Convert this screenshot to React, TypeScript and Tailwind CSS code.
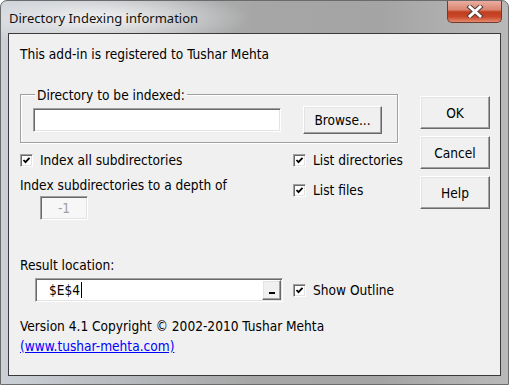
const sunken =
    'border border-t-[#a0a0a0] border-l-[#a0a0a0] border-r-white border-b-white shadow-[inset_1px_1px_0_#696969,inset_-1px_-1px_0_#e3e3e3]';
const raised =
    'border border-t-white border-l-white border-r-[#696969] border-b-[#696969] shadow-[inset_-1px_-1px_0_#a0a0a0,inset_1px_1px_0_#e3e3e3] bg-[#f0f0f0]';

const CheckBox = ({ label }: { label: string }) => (
    <div className="flex h-[16px] items-center whitespace-nowrap">
        <span className={`flex h-[13px] w-[13px] shrink-0 items-center justify-center bg-white ${sunken}`}>
            <svg width="9" height="9" viewBox="0 0 9 9">
                <path d="M1.5 4 L3.5 6.2 L7.5 1.8" fill="none" stroke="#000" strokeWidth="1.8" />
            </svg>
        </span>
        <span className="ml-[7px]">{label}</span>
    </div>
);

const DialogButton = ({ label }: { label: string }) => (
    <button type="button" className={`flex h-[33px] w-[70px] items-center justify-center ${raised}`}>
        {label}
    </button>
);

export default function App() {
    return (
        <div className="flex h-[385px] w-[509px] flex-col rounded-t-[7px] border border-[#6b6b6b] bg-[radial-gradient(ellipse_150px_28px_at_100px_17px,rgba(255,255,255,0.8),rgba(255,255,255,0)),linear-gradient(to_right,#cbd0d6,#b6b9bd_25%,#a6a6a6_50%,#a4a4a4_75%,#b9b9b9)] font-['DejaVu_Sans_Condensed','Liberation_Sans',sans-serif] text-black">
            <div className="flex h-[32px] items-start pl-[8px]">
                <span className="mt-[9px] font-['Noto_Sans',sans-serif] text-[13px] leading-[16px] text-[#111]">
                    Directory Indexing information
                </span>
                <div className="ml-auto mr-[6px] flex h-[22px] w-[55px] items-center justify-center rounded-b-[5px] border border-t-0 border-[#6e3b32] bg-[linear-gradient(to_bottom,#eaada0,#d98571_42%,#c03e1e_52%,#c9482a_75%,#e58a6c)]">
                    <svg width="18" height="13" viewBox="0 0 18 13">
                        <path d="M4 2 L14 11 M14 2 L4 11" stroke="#5a3a36" strokeWidth="5" strokeLinecap="square" />
                        <path d="M4 2 L14 11 M14 2 L4 11" stroke="#fff" strokeWidth="3" strokeLinecap="square" />
                    </svg>
                </div>
            </div>

            <div className="mx-[7px] h-[343px] border border-[#3a3a3a] bg-[#f0f0f0] pl-[11px] pt-[12px] text-[13.6px] leading-[16px]">
                <p>This add-in is registered to Tushar Mehta</p>

                <div className="mt-[32px] flex">
                    <div className="w-[378px] shrink-0">
                        <div className="relative h-[49px] border border-[#a0a0a0] pl-[12px] pt-[11px] shadow-[inset_1px_1px_0_#fff,1px_1px_0_#fff]">
                            <span className="absolute left-[14px] top-[-8px] bg-[#f0f0f0] px-[2px]">
                                Directory to be indexed:
                            </span>
                            <div className="flex items-center">
                                <div className={`h-[24px] w-[248px] bg-white ${sunken}`} />
                                <button type="button" className={`ml-[22px] h-[28px] w-[79px] ${raised}`}>
                                    Browse...
                                </button>
                            </div>
                        </div>

                        <div className="mt-[9px] flex">
                            <div className="w-[273px] shrink-0">
                                <CheckBox label="Index all subdirectories" />
                                <p className="mt-[9px]">Index subdirectories to a depth of</p>
                                <div className={`ml-[20px] mt-[3px] flex h-[24px] w-[48px] items-center justify-center bg-[#f7f7f7] text-[#a0a0a0] ${sunken}`}>
                                    -1
                                </div>
                            </div>
                            <div>
                                <CheckBox label="List directories" />
                                <div className="mt-[14px]">
                                    <CheckBox label="List files" />
                                </div>
                            </div>
                        </div>

                        <p className="mt-[37px]">Result location:</p>
                        <div className="mt-[5px] flex items-center">
                            <div className={`ml-[15px] flex h-[24px] w-[248px] bg-white ${sunken}`}>
                                <div className="flex flex-1 items-center pl-[13px]">
                                    <span>$E$4</span>
                                    <span className="ml-[1px] h-[16px] w-[1px] bg-black" />
                                </div>
                                <div className={`m-[1px] flex w-[19px] items-end justify-center pb-[5px] ${raised}`}>
                                    <span className="h-[2px] w-[6px] bg-black" />
                                </div>
                            </div>
                            <div className="ml-[10px]">
                                <CheckBox label="Show Outline" />
                            </div>
                        </div>

                        <p className="mt-[16px] whitespace-nowrap">Version 4.1 Copyright © 2002-2010 Tushar Mehta</p>
                        <a href="#" className="mt-[4px] block w-fit text-[#0000ff] underline">
                            (www.tushar-mehta.com)
                        </a>
                    </div>

                    <div className="ml-[22px] mt-[2px] flex flex-col gap-[7px]">
                        <DialogButton label="OK" />
                        <DialogButton label="Cancel" />
                        <DialogButton label="Help" />
                    </div>
                </div>
            </div>
        </div>
    );
}
